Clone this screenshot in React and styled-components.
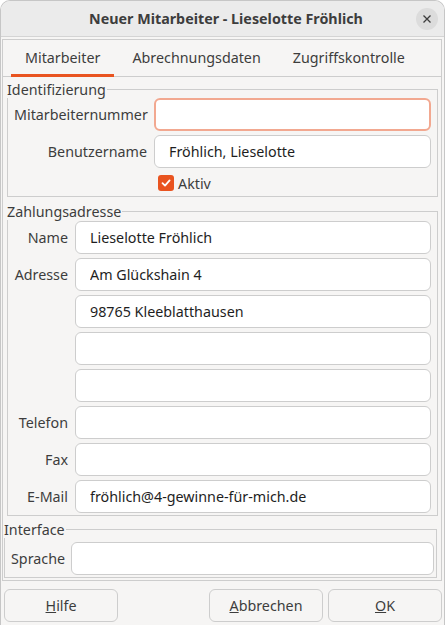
import React from 'react';
import styled, { createGlobalStyle } from 'styled-components';

const GlobalStyle = createGlobalStyle`
  html, body {
    margin: 0;
    padding: 0;
    background: #ffffff;
  }
  body {
    font-family: "Noto Sans", "DejaVu Sans", sans-serif;
    font-size: 14.3px;
    color: #3d3d3d;
  }
`;

const Window = styled.div`
  width: 445px;
  height: 625px;
  box-sizing: border-box;
  display: flex;
  flex-direction: column;
  background: #f6f5f4;
  border: 1px solid #c6c6c6;
  border-bottom: none;
  border-radius: 10px 10px 0 0;
  overflow: hidden;
`;

const TitleBar = styled.div`
  height: 35px;
  flex: none;
  display: grid;
  grid-template-columns: 1fr auto 1fr;
  align-items: center;
  background: #ebebeb;
  border-bottom: 1px solid #d4d4d4;
`;

const Title = styled.div`
  grid-column: 2;
  font-weight: bold;
  font-size: 14.3px;
  color: #3d3d3d;
  padding-left: 7px;
`;

const CloseButton = styled.div`
  grid-column: 3;
  justify-self: end;
  margin-right: 6px;
  width: 22px;
  height: 22px;
  border-radius: 50%;
  background: #dcdcdc;
  display: flex;
  align-items: center;
  justify-content: center;
`;

const Body = styled.div`
  flex: 1;
  display: flex;
  flex-direction: column;
  padding: 2px 2px 0 1px;
`;

const Notebook = styled.div`
  border: 1px solid #cdcdcd;
  background: #f6f5f4;
`;

const TabBar = styled.div`
  display: flex;
  gap: 4px;
  padding-left: 8px;
  height: 36px;
  border-bottom: 1px solid #cdcdcd;
`;

const Tab = styled.div`
  padding: 0 14px;
  height: 37px;
  box-sizing: border-box;
  display: flex;
  align-items: center;
  color: #3d3d3d;
  border-bottom: 3px solid ${p => (p.$active ? '#e95420' : 'transparent')};
`;

const Page = styled.div`
  display: flex;
  flex-direction: column;
  padding: 4px 0 2px 0;
`;

const Frame = styled.fieldset`
  margin: ${p => p.$margin};
  padding: 0;
  border: 1px solid #cdcdcd;
  min-width: 0;
`;

const Legend = styled.legend`
  padding: 0 1px 0 0;
  margin-left: -1px;
  line-height: 17px;
  color: #3d3d3d;
`;

const FormGrid = styled.div`
  display: grid;
  grid-template-columns: ${p => p.$labelWidth}px 1fr;
  column-gap: 7px;
  row-gap: 4px;
  padding: ${p => p.$padding};
`;

const Label = styled.div`
  grid-column: 1;
  text-align: right;
  white-space: nowrap;
  align-self: center;
  color: #3d3d3d;
`;

const Field = styled.input`
  grid-column: 2;
  height: 33px;
  box-sizing: border-box;
  width: 100%;
  margin: 0;
  padding: 0 14px;
  font: inherit;
  color: #1e1e1e;
  background: #ffffff;
  border: ${p => (p.$focused ? '2px solid #f2a890' : '1px solid #cdcdcd')};
  border-radius: 6px;
  outline: none;
`;

const CheckRow = styled.label`
  grid-column: 2;
  height: 22px;
  display: flex;
  align-items: center;
  gap: 4px;
  padding-left: 4px;
  color: #3d3d3d;
`;

const CheckBox = styled.span`
  width: 16px;
  height: 16px;
  border-radius: 3px;
  background: #e95420;
  display: flex;
  align-items: center;
  justify-content: center;
`;

const ButtonRow = styled.div`
  display: flex;
  gap: 5px;
  padding: 8px 0 0 2px;
`;

const Button = styled.div`
  width: 114px;
  height: 33px;
  box-sizing: border-box;
  display: flex;
  align-items: center;
  justify-content: center;
  border: 1px solid #cdcdcd;
  border-radius: 6px;
  background: #f6f5f4;
  color: #3d3d3d;
`;

const Spacer = styled.div`
  flex: 1;
`;

const addressRows = [
  ['Name', 'Lieselotte Fröhlich'],
  ['Adresse', 'Am Glückshain 4'],
  ['', '98765 Kleeblatthausen'],
  ['', ''],
  ['', ''],
  ['Telefon', ''],
  ['Fax', ''],
  ['E-Mail', 'fröhlich@4-gewinne-für-mich.de'],
];

export default function App() {
  return (
    <>
      <GlobalStyle />
      <Window>
        <TitleBar>
          <Title>Neuer Mitarbeiter - Lieselotte Fröhlich</Title>
          <CloseButton>
            <svg width="10" height="10" viewBox="0 0 10 10">
              <path d="M1.5 1.5 L8.5 8.5 M8.5 1.5 L1.5 8.5" stroke="#3d3d3d" strokeWidth="1.3" />
            </svg>
          </CloseButton>
        </TitleBar>
        <Body>
          <Notebook>
            <TabBar>
              <Tab $active>Mitarbeiter</Tab>
              <Tab>Abrechnungsdaten</Tab>
              <Tab>Zugriffskontrolle</Tab>
            </TabBar>
            <Page>
              <Frame $margin="0 3px 0 4px">
                <Legend>Identifizierung</Legend>
                <FormGrid $labelWidth={133} $padding="0 6px 2px 6px">
                  <Label>Mitarbeiternummer</Label>
                  <Field $focused readOnly defaultValue="" />
                  <Label>Benutzername</Label>
                  <Field readOnly defaultValue="Fröhlich, Lieselotte" />
                  <CheckRow>
                    <CheckBox>
                      <svg width="12" height="12" viewBox="0 0 12 12">
                        <path d="M2.5 6.2 L5 8.6 L9.6 3.4" fill="none" stroke="#ffffff" strokeWidth="1.8" strokeLinecap="round" strokeLinejoin="round" />
                      </svg>
                    </CheckBox>
                    Aktiv
                  </CheckRow>
                </FormGrid>
              </Frame>

              <Frame $margin="6px 3px 0 4px">
                <Legend>Zahlungsadresse</Legend>
                <FormGrid $labelWidth={54} $padding="1px 6px 2px 6px">
                  {addressRows.map(([label, value], i) => (
                    <React.Fragment key={i}>
                      <Label>{label}</Label>
                      <Field readOnly defaultValue={value} />
                    </React.Fragment>
                  ))}
                </FormGrid>
              </Frame>

              <Frame $margin="5px 4px 0 1px">
                <Legend>Interface</Legend>
                <FormGrid $labelWidth={53} $padding="4px 2px 2px 6px">
                  <Label>Sprache</Label>
                  <Field readOnly defaultValue="" />
                </FormGrid>
              </Frame>
            </Page>
          </Notebook>
          <ButtonRow>
            <Button><span><u>H</u>ilfe</span></Button>
            <Spacer />
            <Button><span><u>A</u>bbrechen</span></Button>
            <Button><span><u>O</u>K</span></Button>
          </ButtonRow>
        </Body>
      </Window>
    </>
  );
}
